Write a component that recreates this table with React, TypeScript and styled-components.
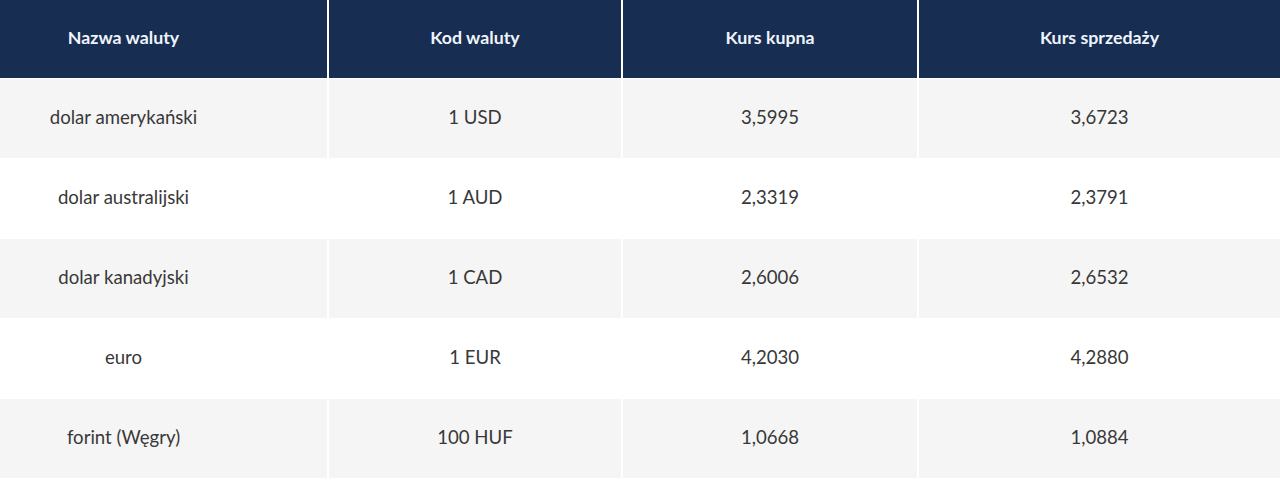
import React from 'react'
import styled, { createGlobalStyle } from 'styled-components'

type Trate = {
  name: string,
  code: string,
  buy: string,
  sell: string,
}

const rates: Trate[] = [
  { name: 'dolar amerykański', code: '1 USD', buy: '3,5995', sell: '3,6723' },
  { name: 'dolar australijski', code: '1 AUD', buy: '2,3319', sell: '2,3791' },
  { name: 'dolar kanadyjski', code: '1 CAD', buy: '2,6006', sell: '2,6532' },
  { name: 'euro', code: '1 EUR', buy: '4,2030', sell: '4,2880' },
  { name: 'forint (Węgry)', code: '100 HUF', buy: '1,0668', sell: '1,0884' },
]

const headers = ['Nazwa waluty', 'Kod waluty', 'Kurs kupna', 'Kurs sprzedaży']

function App() {
  return (
    <>
      <Global />
      <Table>
        {headers.map((h, i) => (
          <HeadCell key={h} $first={i === 0}>{h}</HeadCell>
        ))}
        {rates.map((r, idx) => (
          <React.Fragment key={r.code}>
            <Cell $striped={idx % 2 === 0} $first>{r.name}</Cell>
            <Cell $striped={idx % 2 === 0}>{r.code}</Cell>
            <Cell $striped={idx % 2 === 0}>{r.buy}</Cell>
            <Cell $striped={idx % 2 === 0}>{r.sell}</Cell>
          </React.Fragment>
        ))}
      </Table>
    </>
  )
}

const Global = createGlobalStyle`
  body {
    margin: 0;
    background: #ffffff;
    font-family: Lato, "Noto Sans", sans-serif;
  }
`

const Table = styled.div`
  display: grid;
  grid-template-columns: 327px 292px 294px 1fr;
  grid-template-rows: 78px;
  grid-auto-rows: 79px;
  row-gap: 1px;
  column-gap: 2px;
  background: #ffffff;
  width: 1280px;
`

const HeadCell = styled.div<{ $first?: boolean }>`
  display: flex;
  align-items: center;
  justify-content: center;
  padding-right: ${p => (p.$first ? '80px' : '0')};
  padding-bottom: 4px;
  background: #182d52;
  color: #eef4fb;
  font-weight: 700;
  font-size: 17.8px;
`

const Cell = styled.div<{ $striped?: boolean, $first?: boolean }>`
  display: flex;
  align-items: center;
  justify-content: center;
  padding-right: ${p => (p.$first ? '80px' : '0')};
  padding-bottom: 3px;
  background: ${p => (p.$striped ? '#f5f5f5' : '#ffffff')};
  color: #383838;
  font-size: 18.6px;
`

export default App
